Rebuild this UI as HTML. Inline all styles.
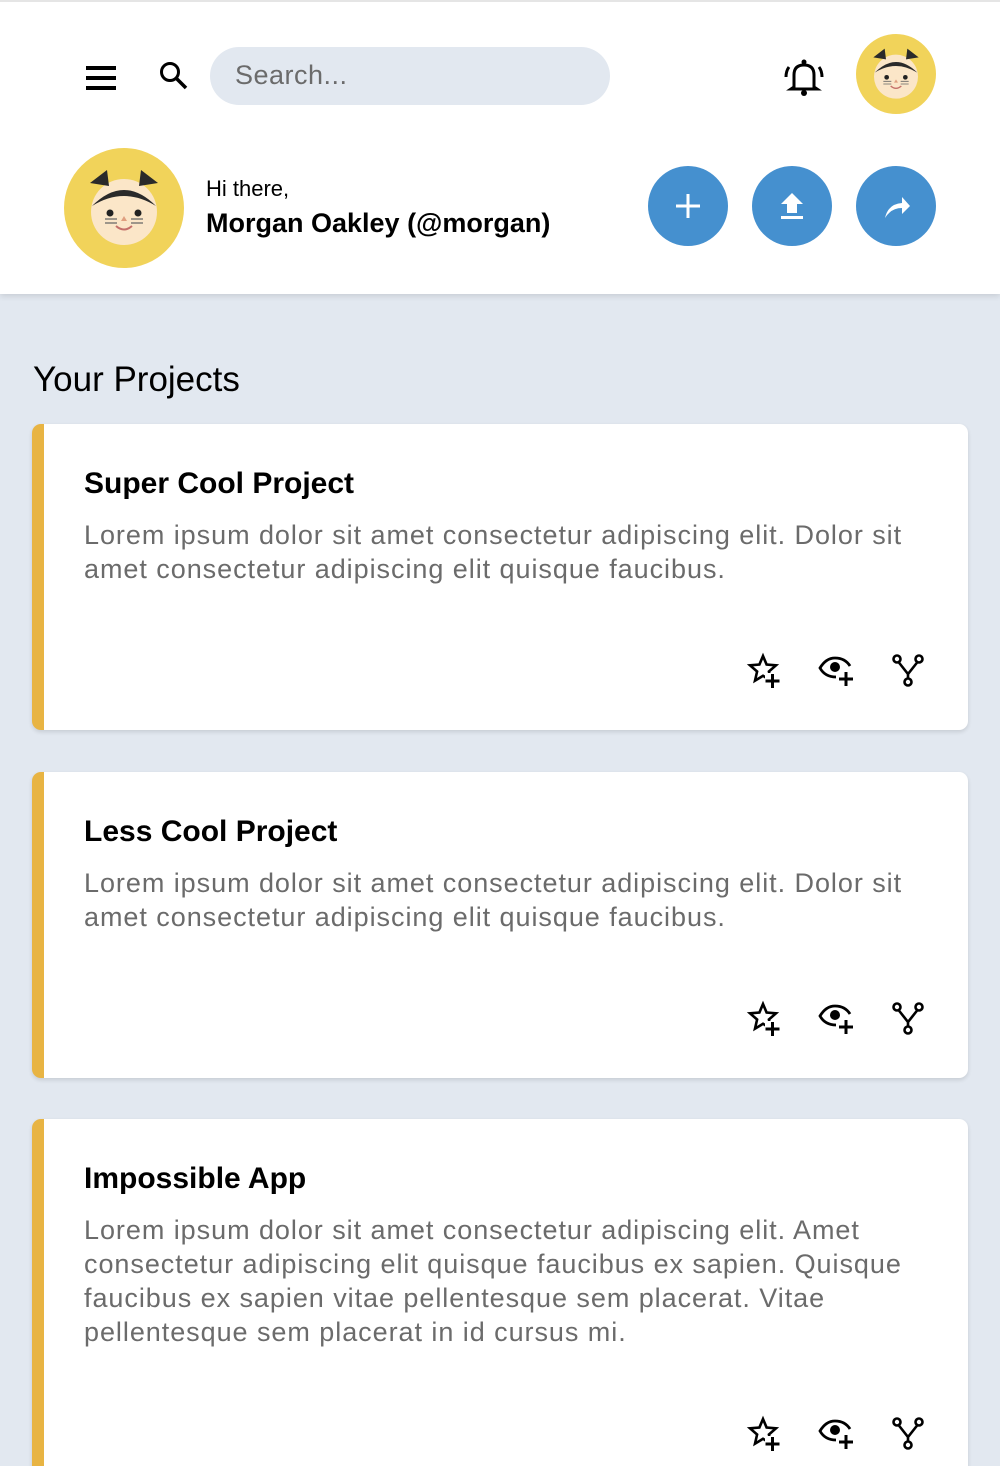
<!DOCTYPE html>
<html><head><meta charset="utf-8"><style>
*{box-sizing:border-box;margin:0;padding:0}
html,body{width:1000px;height:1466px;overflow:hidden}
body{background:#e2e8f0;font-family:"Liberation Sans",Arial,sans-serif;color:#000;position:relative}
.hdr{position:absolute;left:0;top:0;width:1000px;height:294px;background:#fff;border-top:2px solid #e5e5e5;box-shadow:0 2px 6px rgba(0,0,0,.12)}
.abs{position:absolute}
.search{left:210px;top:45px;width:400px;height:58px;border-radius:29px;background:#e2e8f0;font-size:27px;color:#6b6b6b;padding:13px 0 0 25px;letter-spacing:0.5px}
.btn{width:80px;height:80px;border-radius:50%;background:#4590cf;top:164px}
.btn svg{position:absolute;left:20px;top:20px}
h2{position:absolute;left:33px;top:360px;font-size:35px;font-weight:normal}
.card{position:absolute;left:32px;width:936px;background:#fff;border-radius:9px;border-left:12px solid #e8b443;box-shadow:0 2px 4px rgba(0,0,0,.12)}
.card h3{position:absolute;left:40px;top:43px;font-size:30px;font-weight:bold}
.card p{position:absolute;left:40px;top:94px;width:850px;font-size:27px;line-height:34px;color:#6b6b6b;letter-spacing:0.95px}
.icons{position:absolute;right:40px;width:200px;height:40px}
.icons svg{position:absolute;top:0}
</style></head><body>
<div class="hdr">
<svg class="abs" style="left:86px;top:62px" width="31" height="28"><rect x="0" y="2" width="30" height="4"/><rect x="0" y="12" width="30" height="4"/><rect x="0" y="22" width="30" height="4"/></svg>
<svg class="abs" style="left:158px;top:58px" width="32" height="32"><circle cx="12" cy="12" r="8.5" fill="none" stroke="#000" stroke-width="3"/><line x1="18" y1="18" x2="28" y2="28" stroke="#000" stroke-width="3.5"/></svg>
<div class="abs search">Search...</div>
<svg class="abs" style="left:783px;top:55px" width="42" height="40" viewBox="0 0 42 40"><path d="M11 30 L11 18 Q11 8 21 8 Q31 8 31 18 L31 30 L34 32 L8 32 Z" fill="none" stroke="#000" stroke-width="3"/><circle cx="21" cy="5" r="2.5"/><circle cx="21" cy="36" r="3"/><path d="M6 10 Q3 14 3 20 M36 10 Q39 14 39 20" fill="none" stroke="#000" stroke-width="3"/></svg>
<svg class="abs" style="left:856px;top:32px" width="80" height="80" viewBox="0 0 120 120"><circle cx="60" cy="60" r="60" fill="#f1d35a"/><circle cx="60" cy="64" r="33" fill="#fbe6c8"/><path d="M26 35 L43 22 L45 38Z M94 35 L77 22 L75 38Z" fill="#2a2a2a"/><path d="M28 58 Q60 26 92 58 Q60 38 28 58Z" fill="#2a2a2a"/><circle cx="46" cy="65" r="3.5" fill="#222"/><circle cx="74" cy="65" r="3.5" fill="#222"/><path d="M57 73 L63 73 L60 68Z" fill="#e0a080"/><path d="M52 78 Q60 85 68 78" fill="none" stroke="#c4706a" stroke-width="2"/><path d="M41 71 H53 M41 75 H53 M67 71 H79 M67 75 H79" stroke="#666" stroke-width="1.2"/></svg>
<svg class="abs" style="left:64px;top:146px" width="120" height="120" viewBox="0 0 120 120"><circle cx="60" cy="60" r="60" fill="#f1d35a"/><circle cx="60" cy="64" r="33" fill="#fbe6c8"/><path d="M26 35 L43 22 L45 38Z M94 35 L77 22 L75 38Z" fill="#2a2a2a"/><path d="M28 58 Q60 26 92 58 Q60 38 28 58Z" fill="#2a2a2a"/><circle cx="46" cy="65" r="3.5" fill="#222"/><circle cx="74" cy="65" r="3.5" fill="#222"/><path d="M57 73 L63 73 L60 68Z" fill="#e0a080"/><path d="M52 78 Q60 85 68 78" fill="none" stroke="#c4706a" stroke-width="2"/><path d="M41 71 H53 M41 75 H53 M67 71 H79 M67 75 H79" stroke="#666" stroke-width="1.2"/></svg>
<div class="abs" style="left:206px;top:174px;font-size:22px">Hi there,</div>
<div class="abs" style="left:206px;top:206px;font-size:27px;font-weight:bold">Morgan Oakley (@morgan)</div>
<div class="abs btn" style="left:648px"><svg width="40" height="40"><rect x="18.5" y="8" width="3" height="24" fill="#fff"/><rect x="8" y="18.5" width="24" height="3" fill="#fff"/></svg></div>
<div class="abs btn" style="left:752px"><svg width="40" height="40"><path d="M20 7 L31 18 L25 18 L25 27 L15 27 L15 18 L9 18Z" fill="#fff"/><rect x="9" y="30" width="22" height="3" fill="#fff"/></svg></div>
<div class="abs btn" style="left:856px"><svg width="40" height="40"><path d="M9 32 Q12 18 26 17 L26 11 L34 20 L26 28 L26 22 Q15 22 9 32Z" fill="#fff"/></svg></div>
</div>
<h2>Your Projects</h2>

<div class="card" style="top:424px;height:306px"><h3>Super Cool Project</h3><p>Lorem ipsum dolor sit amet consectetur adipiscing elit. Dolor sit amet consectetur adipiscing elit quisque faucibus.</p>
<div class="icons" style="top:228px"></div></div>
<div class="card" style="top:772px;height:306px"><h3>Less Cool Project</h3><p>Lorem ipsum dolor sit amet consectetur adipiscing elit. Dolor sit amet consectetur adipiscing elit quisque faucibus.</p>
<div class="icons" style="top:228px"></div></div>
<div class="card" style="top:1119px;height:360px"><h3>Impossible App</h3><p>Lorem ipsum dolor sit amet consectetur adipiscing elit. Amet consectetur adipiscing elit quisque faucibus ex sapien. Quisque faucibus ex sapien vitae pellentesque sem placerat. Vitae pellentesque sem placerat in id cursus mi.</p>
<div class="icons" style="top:296px"></div></div>

<script>
var ic='<svg style="left:18px" width="40" height="40" viewBox="0 0 40 40"><polygon points="17,4 20.6,12.5 30,13.3 22.9,19.5 25,28.7 17,23.8 9,28.7 11.1,19.5 4,13.3 13.4,12.5" fill="none" stroke="#000" stroke-width="2.6" stroke-linejoin="miter"/><rect x="19" y="21" width="16" height="16" fill="#fff"/><path d="M26.5 22 V36 M19.5 29 H33.5" stroke="#000" stroke-width="3"/></svg>'+
'<svg style="left:89px" width="40" height="36" viewBox="0 0 40 36"><path d="M19 25 Q8 25 3 16 Q9 6 18 6 Q28 6 33 14" fill="none" stroke="#000" stroke-width="2.8"/><circle cx="18" cy="15" r="5"/><path d="M29 20 V34 M22 27 H36" stroke="#000" stroke-width="3"/></svg>'+
'<svg style="left:162px" width="36" height="36" viewBox="0 0 36 36"><circle cx="7" cy="7" r="3.5" fill="none" stroke="#000" stroke-width="2.6"/><circle cx="29" cy="7" r="3.5" fill="none" stroke="#000" stroke-width="2.6"/><circle cx="18" cy="30" r="3.5" fill="none" stroke="#000" stroke-width="2.6"/><path d="M8.5 10 L18 22 L27.5 10 M18 22 V26.5" fill="none" stroke="#000" stroke-width="2.6"/></svg>';
document.querySelectorAll('.icons').forEach(function(e){e.innerHTML=ic});
</script>
</body></html>
